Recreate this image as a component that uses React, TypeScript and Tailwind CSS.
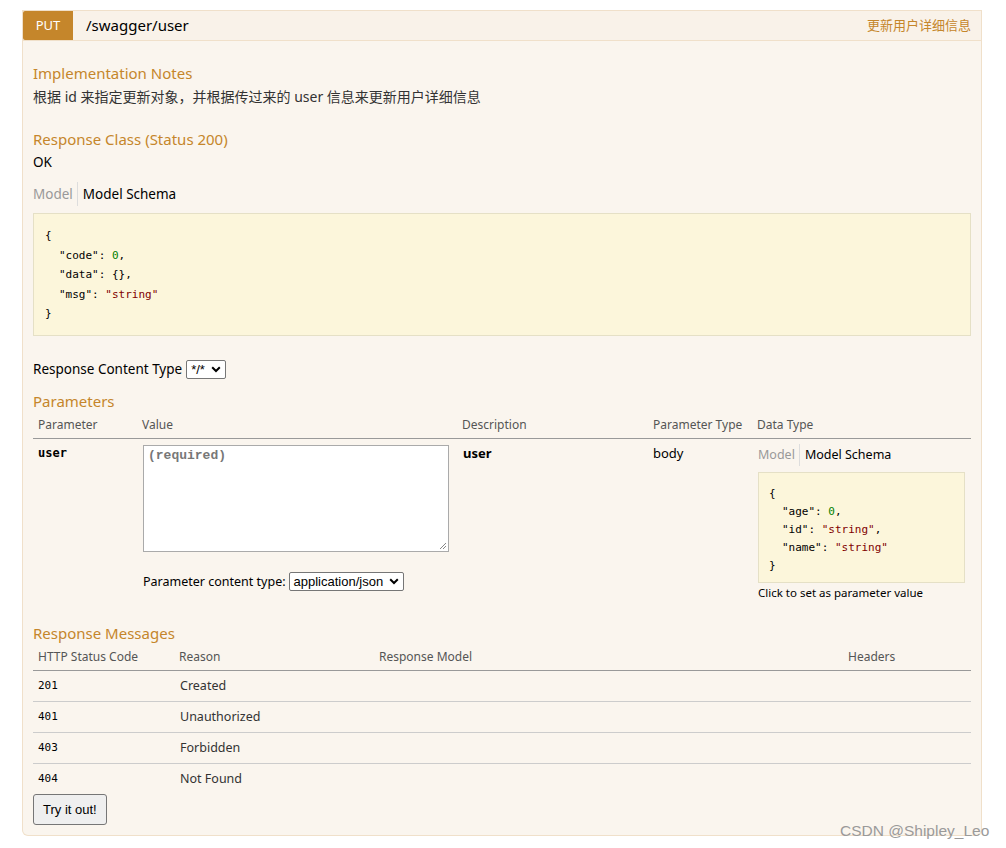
import { ReactNode } from 'react'

const SANS = { fontFamily: '"Noto Sans", "Open Sans", "Noto Sans CJK SC", sans-serif' }
const MONO = { fontFamily: '"DejaVu Sans Mono", "Liberation Mono", monospace' }
const ARIAL = { fontFamily: '"Liberation Sans", Arial, sans-serif' }

function Heading({ children, className = '' }: { children: ReactNode; className?: string }) {
  return <h4 className={`text-[15px] leading-[20px] text-[#c5862b] ${className}`}>{children}</h4>
}

function ModelTabs({ size, lh }: { size: string; lh: string }) {
  return (
    <div className={`flex items-center ${size} ${lh}`}>
      <span className="text-[#999] pr-[4px] border-r border-[#ddd]">Model</span>
      <span className="text-black pl-[5px]">Model Schema</span>
    </div>
  )
}

function Chevron() {
  return (
    <svg width="10" height="7" viewBox="0 0 10 7" className="ml-[6px]">
      <path d="M1.2 1.3 5 5 8.8 1.3" fill="none" stroke="#000" strokeWidth="2" />
    </svg>
  )
}

function Select({ value }: { value: string }) {
  return (
    <span
      className="inline-flex items-center h-[19px] px-[4px] border border-[#767676] rounded-[2px] bg-white text-[13px] text-black"
      style={ARIAL}
    >
      {value}
      <Chevron />
    </span>
  )
}

const Str = ({ children }: { children: ReactNode }) => <span className="text-[#800000]">{children}</span>
const Num = ({ children }: { children: ReactNode }) => <span className="text-[#008000]">{children}</span>

const responses = [
  ['201', 'Created'],
  ['401', 'Unauthorized'],
  ['403', 'Forbidden'],
  ['404', 'Not Found'],
]

const PARAM_COLS = 'grid grid-cols-[104px_320px_191px_104px_1fr]'
const RESP_COLS = 'grid grid-cols-[141px_200px_469px_1fr]'

export default function App() {
  return (
    <div className="relative w-[1006px] h-[848px] bg-white text-[#333]" style={SANS}>
      <div className="pt-[10px] pl-[22px] w-[982px]">
        {/* heading bar */}
        <div className="flex items-center h-[31px] bg-[#f9f2e9] border border-[#f0e0ca]">
          <span className="flex items-center justify-center w-[50px] h-[29px] bg-[#c5862b] text-white text-[13px] rounded-l-[2px]">
            PUT
          </span>
          <span className="ml-[13px] text-[15px] text-black">/swagger/user</span>
          <span className="ml-auto mr-[10px] text-[13px] text-[#c5862b]">更新用户详细信息</span>
        </div>

        {/* content */}
        <div className="bg-[#faf5ee] border border-t-0 border-[#f0e0ca] rounded-b-[6px] px-[10px] pt-[22px] pb-[10px]">
          <Heading>Implementation Notes</Heading>
          <p className="mt-[2px] text-[14px] leading-[24px]">根据 id 来指定更新对象，并根据传过来的 user 信息来更新用户详细信息</p>

          <Heading className="mt-[20px]">Response Class (Status 200)</Heading>
          <p className="mt-[2px] text-[13.5px] leading-[22px] text-black">OK</p>
          <div className="mt-[9px]">
            <ModelTabs size="text-[13.5px]" lh="leading-[24px]" />
          </div>
          <div
            className="mt-[7px] h-[123px] bg-[#fcf6db] border border-[#e5e0c6] px-[11px] pt-[12px] text-[11px] leading-[19.5px] text-black"
            style={MONO}
          >
            <div>{'{'}</div>
            <div className="pl-[14px]">"code": <Num>0</Num>,</div>
            <div className="pl-[14px]">"data": {'{}'},</div>
            <div className="pl-[14px]">"msg": <Str>"string"</Str></div>
            <div>{'}'}</div>
          </div>

          <div className="mt-[24px] h-[19px] flex items-center text-[13.5px] text-black">
            <span className="mr-[4px]">Response Content Type</span>
            <Select value="*/*" />
          </div>

          <Heading className="mt-[12px]">Parameters</Heading>
          <div className={`${PARAM_COLS} h-[28px] items-end pb-[5px] border-b border-[#999] text-[12px] leading-[16px] text-[#555]`}>
            <span className="pl-[5px]">Parameter</span>
            <span className="pl-[5px]">Value</span>
            <span className="pl-[5px]">Description</span>
            <span className="pl-[5px]">Parameter Type</span>
            <span className="pl-[5px]">Data Type</span>
          </div>
          <div className={`${PARAM_COLS} pt-[6px] text-[12.5px] leading-[16px]`}>
            <span className="pl-[5px] font-bold text-[12px] text-black" style={MONO}>user</span>
            <div className="pl-[6px]">
              <div className="relative w-[306px] h-[107px] bg-white border border-[#aaa]">
                <span
                  className="absolute left-[4px] top-[2px] text-[13px] font-bold text-[#777]"
                  style={{ fontFamily: '"Liberation Mono", "Courier New", monospace' }}
                >
                  (required)
                </span>
                <svg className="absolute right-[1px] bottom-[1px]" width="8" height="8" viewBox="0 0 8 8">
                  <path d="M7 1 1 7M7 4 4 7" stroke="#888" strokeWidth="1" />
                </svg>
              </div>
              <div className="mt-[20px] h-[19px] flex items-center text-black">
                <span className="mr-[3px]">Parameter content type:</span>
                <Select value="application/json" />
              </div>
            </div>
            <span className="pl-[6px] font-bold text-[13px] text-black">user</span>
            <span className="pl-[5px] text-[13px] text-black">body</span>
            <div className="pl-[6px] -mt-[1px]">
              <ModelTabs size="text-[12.5px]" lh="leading-[22px]" />
              <div
                className="mt-[6px] w-[207px] h-[111px] bg-[#fcf6db] border border-[#e5e0c6] px-[10px] pt-[12px] text-[11px] leading-[18px] text-black"
                style={MONO}
              >
                <div>{'{'}</div>
                <div className="pl-[13px]">"age": <Num>0</Num>,</div>
                <div className="pl-[13px]">"id": <Str>"string"</Str>,</div>
                <div className="pl-[13px]">"name": <Str>"string"</Str></div>
                <div>{'}'}</div>
              </div>
              <div className="mt-[2px] text-[11.5px] leading-[16px] text-black">Click to set as parameter value</div>
            </div>
          </div>

          <Heading className="mt-[22px]">Response Messages</Heading>
          <div className={`${RESP_COLS} h-[28px] items-end pb-[5px] border-b border-[#999] text-[12px] leading-[16px] text-[#555]`}>
            <span className="pl-[5px]">HTTP Status Code</span>
            <span className="pl-[5px]">Reason</span>
            <span className="pl-[5px]">Response Model</span>
            <span className="pl-[5px]">Headers</span>
          </div>
          {responses.map(([code, reason], i) => (
            <div
              key={code}
              className={`${RESP_COLS} items-center text-[12.5px] text-[#333] ${
                i < responses.length - 1 ? 'h-[31px] border-b border-[#ccc]' : 'h-[30px]'
              }`}
            >
              <span className="pl-[5px] text-[11px] text-black" style={MONO}>{code}</span>
              <span className="pl-[6px]">{reason}</span>
              <span />
              <span />
            </div>
          ))}
          <button
            className="h-[31px] px-[9px] bg-[#efefef] border border-[#767676] rounded-[3px] text-[13px] text-black"
            style={ARIAL}
          >
            Try it out!
          </button>
        </div>
      </div>

      <span className="absolute left-[840px] top-[819px] text-[15.5px] text-[#9a9a9a]" style={ARIAL}>
        CSDN @Shipley_Leo
      </span>
    </div>
  )
}
